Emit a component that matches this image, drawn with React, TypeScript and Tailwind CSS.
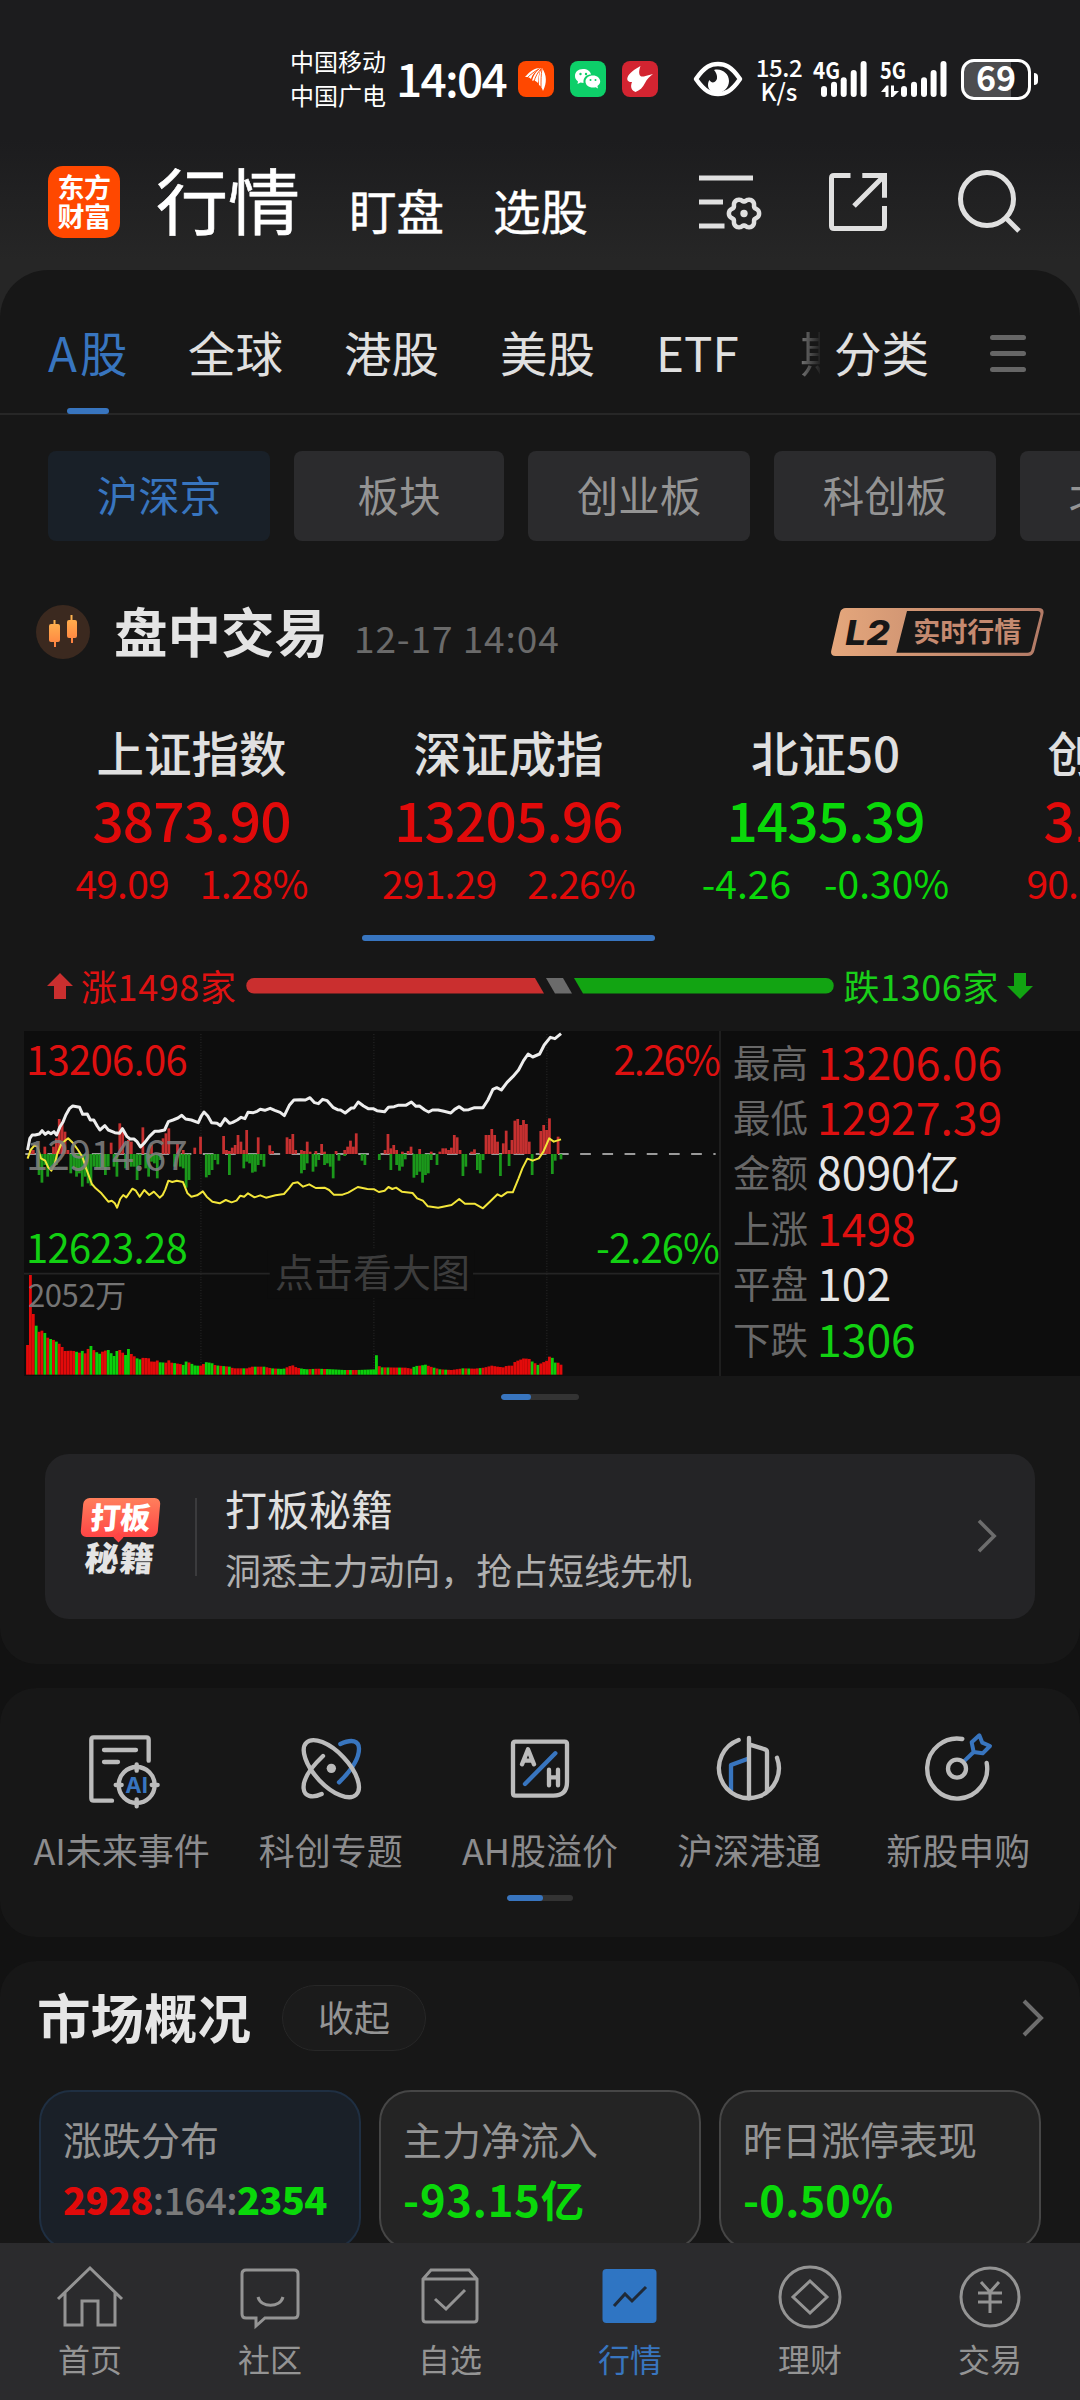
import React from "react";

const FONT = "font-['Noto_Sans_CJK_SC','Noto_Sans',sans-serif]";

/* ---------- intraday chart data (chart units) ---------- */
const X0 = 72;
const STEP = 7.535;
const MID = 702;
const BASE = 1364;

const PRICE =
  "72,690 78,655 84,645 92,645 103,642 110,632 118,643 126,636 133,641 141,635 148,645 156,622 165,605 172,585 182,565 190,558 208,562 216,583 228,582 236,600 245,600 254,618 261,630 274,617 283,630 300,638 312,640 320,626 332,650 340,657 350,657 358,665 367,681 378,668 390,650 404,634 415,634 430,630 440,605 452,600 465,594 475,586 485,597 500,600 518,608 526,588 533,576 543,588 553,608 567,610 576,617 588,596 600,610 608,607 620,600 630,592 640,596 648,577 662,578 672,574 680,568 692,571 706,565 718,571 732,577 743,587 756,556 768,540 785,539 798,540 810,533 822,548 832,551 843,538 855,542 870,562 882,569 890,570 902,579 918,564 925,564 936,546 950,558 962,566 975,566 985,572 1005,575 1015,562 1030,560 1040,556 1060,556 1075,546 1087,559 1096,558 1110,570 1120,576 1130,570 1145,570 1160,574 1178,579 1188,568 1200,560 1212,570 1225,569 1240,563 1262,563 1275,540 1288,508 1298,503 1310,510 1325,487 1340,470 1355,450 1368,422 1380,402 1392,411 1410,402 1422,375 1438,352 1450,356 1466,341";
const AVERAGE =
  "72,716 80,690 90,676 98,680 107,715 118,722 126,742 134,752 142,735 150,700 160,672 172,660 178,655 190,668 204,690 215,710 225,745 240,792 250,805 265,820 283,845 292,842 300,850 306,863 314,837 322,825 330,832 346,806 355,812 365,830 377,810 390,825 402,815 417,833 425,825 432,808 440,782 450,786 462,782 478,786 490,820 500,830 515,826 530,814 540,830 555,845 574,850 590,840 605,847 618,842 628,827 638,830 648,820 665,832 680,826 695,833 720,826 742,822 755,805 765,790 778,787 792,800 808,793 825,804 848,803 860,810 872,824 895,824 910,818 935,801 960,807 978,808 990,816 1005,812 1015,801 1025,807 1035,803 1050,815 1078,819 1090,835 1105,842 1118,859 1145,863 1180,855 1200,837 1215,851 1240,851 1262,865 1280,845 1300,823 1310,829 1325,817 1340,817 1355,775 1365,745 1378,716 1392,722 1408,715 1420,695 1435,655 1447,665 1466,658";
const UP =
  "80:690 87:690 118:680 141:680 148:655 156:597 163:605 170:635 178:690 291:668 313:610 321:630 336:660 343:665 374:622 397:675 427:655 434:640 442:625 465:672 480:690 510:683 525:650 585:648 593:690 600:693 608:683 615:675 622:645 630:665 638:690 645:630 675:652 706:676 713:693 751:652 758:657 766:642 773:690 788:690 796:693 804:665 811:695 826:693 841:672 849:695 879:693 902:690 909:680 917:662 924:680 932:640 1007:690 1015:642 1022:685 1030:675 1037:690 1052:695 1067:693 1075:680 1098:687 1127:695 1150:695 1157:685 1165:685 1173:690 1180:683 1188:645 1195:652 1203:690 1233:695 1241:688 1271:645 1278:645 1286:627 1293:645 1301:665 1316:670 1324:632 1331:690 1339:660 1346:602 1353:597 1361:615 1369:600 1376:612 1384:665 1414:633 1421:615 1429:630 1437:595 1459:650";
const DOWN =
  "103:765 110:788 118:735 126:770 133:750 141:735 148:735 186:760 193:745 200:770 208:760 216:800 223:770 231:790 238:797 246:740 254:745 261:745 268:742 276:765 283:740 298:740 306:770 328:745 343:740 351:740 359:780 366:735 381:745 389:770 397:725 404:730 412:775 419:720 457:740 472:740 480:745 487:803 495:780 540:772 548:765 555:750 563:720 571:733 600:765 638:745 645:725 653:730 660:758 668:755 675:735 683:720 691:740 788:760 796:750 804:730 819:755 826:740 834:720 849:735 857:730 864:740 871:775 887:722 902:708 947:722 955:735 992:720 1022:750 1037:735 1045:752 1052:740 1060:718 1082:773 1090:765 1098:755 1105:788 1112:765 1120:760 1127:720 1143:735 1210:768 1218:740 1248:750 1256:760 1263:720 1308:768 1331:738 1391:765 1444:762 1452:722 1467:718";
const VOLUME =
  "72:1275 80:1065 87:1182 95:1217 103:1238 110:1232 118:1240 126:1255 141:1260 156:1272 170:1293 190:1292 208:1298 216:1292 223:1300 231:1285 238:1278 246:1292 261:1302 270:1293 283:1290 298:1308 306:1293 313:1290 328:1305 336:1287 343:1302 358:1315 366:1318 374:1313 389:1315 397:1326 404:1325 412:1321 419:1327 434:1328 442:1320 449:1328 470:1332 480:1335 487:1323 495:1328 510:1337 525:1337 540:1326 555:1330 563:1336 600:1340 610:1345 645:1345 660:1340 690:1340 710:1345 740:1347 758:1338 766:1336 775:1343 800:1348 830:1346 870:1348 900:1350 935:1350 977:1348 984:1304 992:1342 1060:1343 1075:1346 1085:1338 1098:1337 1112:1334 1125:1340 1150:1348 1180:1350 1210:1345 1240:1346 1265:1343 1285:1337 1300:1340 1315:1342 1325:1337 1340:1337 1346:1325 1369:1315 1384:1317 1391:1325 1406:1335 1414:1330 1429:1322 1437:1308 1444:1314 1452:1330 1459:1328 1467:1335";
const GREEN_VOLUME = [
  95, 118, 133, 148, 200, 216, 238, 253, 261, 283, 291, 298, 306, 328, 336, 358, 366, 419, 427, 457, 480, 487, 502, 510,
  517, 540, 548, 555, 571, 585, 600, 638, 668, 690, 713, 728, 736, 743, 788, 796, 804, 819, 841, 857, 864, 871, 879, 887,
  894, 902, 917, 940, 947, 955, 962, 970, 977, 984, 1000, 1015, 1045, 1082, 1090, 1105, 1112, 1135, 1150, 1165, 1210,
  1225, 1256, 1391, 1406, 1444, 1452,
];

const parse = (s: string) => s.split(" ").map((p) => p.split(":").map(Number) as [number, number]);
const slot = (x: number) => Math.round((x - X0) / STEP);
const greenSlots = new Set(GREEN_VOLUME.map(slot));
const volumePoints = parse(VOLUME);

function volumeTop(x: number) {
  for (let i = 1; i < volumePoints.length; i++) {
    const [ax, ay] = volumePoints[i - 1];
    const [bx, by] = volumePoints[i];
    if (x <= bx + 0.5) return ay + ((by - ay) * Math.min(1, Math.max(0, (x - ax) / (bx - ax))));
  }
  return volumePoints[volumePoints.length - 1][1];
}

function Chart() {
  const volumes = Array.from({ length: 186 }, (_, i) => {
    const nominal = X0 + i * STEP;
    return { i, x: nominal, top: volumeTop(i < 60 ? Math.round(nominal) : nominal) };
  });
  return (
    <svg className="block h-[345px] w-[696px]" viewBox="62.7 333 1818.7 1035" preserveAspectRatio="none">
      {[525, 977, 1429].map((x) => (
        <line key={x} x1={x} x2={x} y1="342" y2="1364" stroke="#262626" strokeWidth="3" strokeDasharray="3 5" />
      ))}
      <rect x="700" y="990" width="540" height="145" fill="#0d0d0d" />
      <path d="M62.7 1061H705M1236 1061H1880" stroke="#242424" strokeWidth="5" />
      <line x1="66" x2="1870" y1={MID} y2={MID} stroke="#9a9a9a" strokeWidth="6" strokeDasharray="28 30" />
      {parse(UP).map(([x, y]) => (
        <rect key={x} x={X0 + slot(x) * STEP - 3.7} y={y} width="7.2" height={MID - y} fill="#c63030" />
      ))}
      {parse(DOWN).map(([x, y]) => (
        <rect key={x} x={X0 + slot(x) * STEP - 3.7} y={MID} width="7.2" height={y - MID} fill="#1b981b" />
      ))}
      {volumes.map((v) => (
        <rect
          key={v.i}
          x={v.x - 3.8}
          y={v.top}
          width="7.4"
          height={BASE - v.top}
          fill={greenSlots.has(v.i) ? "#0bd00b" : "#e30a0a"}
        />
      ))}
      <polyline points={AVERAGE} fill="none" stroke="#f3e63a" strokeWidth="2" strokeLinejoin="round" vectorEffect="non-scaling-stroke" />
      <polyline points={PRICE} fill="none" stroke="#ededed" strokeWidth="3" strokeLinejoin="round" vectorEffect="non-scaling-stroke" />
    </svg>
  );
}

/* ---------- status bar ---------- */
function StatusBar() {
  const tops = [86, 81.7, 77.3, 70, 61];
  return (
    <div className="flex h-[158px] items-center pl-[290px] text-white">
      <div className="flex w-[106px] -translate-y-[1px] flex-col gap-[10px] text-[24px] leading-[24px]">
        <span>中国移动</span>
        <span>中国广电</span>
      </div>
      <div className="w-[122px] -translate-y-[2px] whitespace-nowrap text-[46px] font-medium leading-[50px] tracking-[-1.7px]">14:04</div>
      <div className="flex gap-4">
        <svg className="size-9" viewBox="0 0 36 36">
          <rect width="36" height="36" rx="8" fill="#ff4800" />
          <path d="M7 16c5-6 10-9 15-9-5 3-8 7-9 11-2-2-4-2-6-2zM14 20c1-5 4-10 9-13-2 5-3 10-3 15-2-2-4-3-6-2zM21 24c-1-6 0-12 3-17 5 7 5 15 1 23-1-3-2-5-4-6z" fill="#fff" />
          <path d="M9 17c4-4 8-7 12-9M16 21c1-5 4-10 7-13M23 26c0-7 0-12 1-18" stroke="#ff4800" strokeWidth=".9" fill="none" />
        </svg>
        <svg className="size-9" viewBox="0 0 36 36">
          <rect width="36" height="36" rx="8" fill="#0dcf69" />
          <path d="M13 8c-5 0-8 3-8 7 0 2.400 1 4 3 5.400L7.500 23l3-1.500c1 .3 2 .4 3 .4C13 16 17 13.500 21 13.500 20.500 10 17 8 13 8z" fill="#fff" />
          <path d="M23 14.500c-4.500 0-7.500 2.700-7.500 6.100s3 6 7.500 6c1 0 1.800-.1 2.600-.4L28 27.500l-.6-2.400c1.700-1.100 2.800-2.700 2.800-4.500 0-3.400-3-6.100-7.200-6.100z" fill="#fff" />
          <g fill="#0dcf69">
            <circle cx="10.500" cy="13" r="1.200" />
            <circle cx="16" cy="13" r="1.200" />
            <circle cx="20.500" cy="19" r="1" />
            <circle cx="25.500" cy="19" r="1" />
          </g>
        </svg>
        <svg className="size-9" viewBox="0 0 36 36">
          <rect width="36" height="36" rx="8" fill="#d32431" />
          <path d="M18.500 5c-1.500 4-2 8 0 10 1.200 1 3 .6 5 0l7.500-2c-3.500 2.500-6 5-8 9-2 4.500-5.500 7.500-9.500 9-4-1.500-5.500-5-3.500-10-3 .5-5.500-1.500-4.500-4.500C7 12 13 8 18.500 5z" fill="#fff" />
        </svg>
      </div>
      <svg className="ml-[35px] h-9 w-[50px]" viewBox="0 0 50 36">
        <path d="M3 18C12 5 18 3 25 3s13 2 22 15C38 31 32 33 25 33S12 31 3 18z" fill="none" stroke="#fff" strokeWidth="4.500" strokeLinejoin="round" />
        <path d="M21 9c8-2 15 4 15 11 0 6-5 12-12 12-6 0-9-4-9-8 0-2 .5-4 1.500-5 1 2 3 3 5 2 4-2 3-8-.5-12z" fill="#fff" />
      </svg>
      <div className="ml-[9px] flex w-[54px] flex-col items-center text-[24px] font-medium leading-[24px]">
        <span className="tracking-[-0.4px]">15.2</span>
        <span>K/s</span>
      </div>
      <svg className="ml-[5px] h-10 w-[138px]" viewBox="811 59 138 40" fill="#fff">
        {[824, 834, 843.7, 853.7, 863.6].map((x, i) => (
          <rect key={x} x={x - 3} y={tops[i]} width="6" height={97 - tops[i]} rx="3" />
        ))}
        {[904, 914, 924, 933.6, 943.5].map((x, i) => (
          <rect key={x} x={x - 3} y={tops[i]} width="6" height={97 - tops[i]} rx="3" />
        ))}
        <text x="813" y="78.500" fontSize="23" fontWeight="700" textLength="27" lengthAdjust="spacingAndGlyphs">4G</text>
        <text x="880" y="78.500" fontSize="23" fontWeight="700" textLength="26" lengthAdjust="spacingAndGlyphs">5G</text>
        <path d="M881 92l5.500-6.500h2V97h-3v-5zM891 85.500h3V91h5l-6 6h-2z" />
      </svg>
      <div className="ml-[12px] flex h-[41px] w-[70px] items-center justify-center rounded-[13px] border-[3px] border-white bg-[linear-gradient(90deg,#4d4d4f_74%,#1c1c1e_74%)] text-[34px] font-bold leading-[34px]">
        <span className="-translate-y-[2px]">69</span>
      </div>
      <div className="ml-[3px] h-3 w-[4px] rounded-r-sm bg-white" />
    </div>
  );
}

const GEAR = Array.from({ length: 72 }, (_, i) => {
  const a = (i / 72) * Math.PI * 2;
  const r = 13.8 + 1.6 * Math.cos(6 * a) - 0.3 * Math.cos(12 * a);
  return `${(744 + r * Math.cos(a)).toFixed(2)},${(213.5 + r * Math.sin(a)).toFixed(2)}`;
}).join(" ");

function TitleBar() {
  return (
    <div className="flex h-[112px] items-center pb-[24px] pl-[48px] text-white">
      <div className="flex h-[72px] w-[72px] flex-col items-center justify-center rounded-[15px] bg-[#ff4800] pb-[3px] text-[27px] font-bold leading-[29px] tracking-[-0.5px]">
        <span>东方</span>
        <span>财富</span>
      </div>
      <div className="ml-[36px] w-[192px] -translate-y-[4px] whitespace-nowrap text-[72px] font-normal leading-[80px] [-webkit-text-stroke:0.6px_white]">行情</div>
      <div className="ml-[1px] w-[144px] translate-y-[8px] whitespace-nowrap text-[47.500px] font-normal leading-[50px] [-webkit-text-stroke:0.4px_white]">盯盘</div>
      <div className="w-[203px] translate-y-[8px] whitespace-nowrap text-[47.500px] font-normal leading-[50px] [-webkit-text-stroke:0.4px_white]">选股</div>
      <svg className="h-[68px] w-[330px]" viewBox="696 168 330 68" fill="none" stroke="#e0e0e0" strokeWidth="5">
        <path d="M699 178H753M699 202H723M699 226H724.500" />
        <polygon points={GEAR} strokeWidth="4.500" strokeLinejoin="round" />
        <circle cx="744" cy="213.500" r="3.700" fill="#e0e0e0" stroke="none" />
        <path d="M850.500 175.500H834q-2.500 0-2.500 2.500V226q0 2.500 2.500 2.500H882q2.500 0 2.500-2.500V206M862.300 175.500H884.500V197.700M884 176L854 206" />
        <circle cx="987" cy="199" r="26.500" />
        <path d="M1006 218L1019 231" />
      </svg>
    </div>
  );
}

/* ---------- market panel ---------- */
function MarketTabs() {
  return (
    <div className="relative flex h-[145px] items-center border-b-2 border-[#272727] pt-[22px] pl-[48px] text-[47.500px] leading-[60px] text-[#e0e0e0]">
      <span className="w-[140px] -translate-y-[1px] tracking-[3px] text-[#3875bf]">A股</span>
      <span className="w-[156px] -translate-y-[1px]">全球</span>
      <span className="w-[156px] -translate-y-[1px]">港股</span>
      <span className="w-[156px] -translate-y-[1px]">美股</span>
      <span className="w-[144px] -translate-y-[1px]">ETF</span>
      <span className="w-[20px] -translate-y-[1px] overflow-hidden whitespace-nowrap bg-[linear-gradient(90deg,#777,#222)] bg-clip-text text-transparent">期</span>
      <span className="ml-[14px] w-[156px] -translate-y-[1px]">分类</span>
      <span className="flex translate-y-[1px] flex-col gap-[11px]">
        <i className="h-[5px] w-[36px] rounded bg-[#666]" />
        <i className="h-[5px] w-[36px] rounded bg-[#666]" />
        <i className="h-[5px] w-[36px] rounded bg-[#666]" />
      </span>
      <i className="absolute bottom-[-1px] left-[67px] h-[6px] w-[42px] rounded-full bg-[#3875bf]" />
    </div>
  );
}

function Chips() {
  const base = "flex h-[90px] shrink-0 items-center justify-center whitespace-nowrap rounded-[8px] pb-[4px] text-[41.500px]";
  return (
    <div className="mt-[36px] flex gap-[24px] overflow-hidden pl-[48px]">
      <div className={`${base} w-[222px] bg-[#192028] text-[#3875bf]`}>沪深京</div>
      <div className={`${base} w-[210px] bg-[#2b2b2d] text-[#949494]`}>板块</div>
      <div className={`${base} w-[222px] bg-[#2b2b2d] text-[#949494]`}>创业板</div>
      <div className={`${base} w-[222px] bg-[#2b2b2d] text-[#949494]`}>科创板</div>
      <div className={`${base} w-[222px] bg-[#2b2b2d] text-[#949494]`}>北交所</div>
    </div>
  );
}

function SessionHeader() {
  return (
    <div className="mt-[61px] flex h-[60px] items-center pl-[36px]">
      <svg className="size-[54px]" viewBox="0 0 54 54">
        <defs>
          <linearGradient id="candle" x1="0" y1="0" x2="0" y2="1">
            <stop offset="0" stopColor="#ffb650" />
            <stop offset="1" stopColor="#ff8040" />
          </linearGradient>
        </defs>
        <circle cx="27" cy="27" r="27" fill="#3b291f" />
        <g fill="url(#candle)">
          <path d="M13 21q0-2 2-2h2.500v-4h2v4H22q2 0 2 2v14q0 2-2 2h-2v5h-2v-5h-3q-2 0-2-2z" />
          <path d="M31 17q0-2 2-2h1.500v-5h2v5H39q2 0 2 2v14q0 2-2 2h-2v5h-2v-5h-2q-2 0-2-2z" />
        </g>
      </svg>
      <div className="ml-[24px] w-[240px] -translate-y-[2px] whitespace-nowrap text-[53.500px] font-bold leading-[60px] text-[#e4e4e4]">盘中交易</div>
      <div className="w-[466px] translate-y-[5px] whitespace-nowrap text-[37px] leading-[44px] tracking-[0.9px] text-[#6a6a6a]">12-17 14:04</div>
      <svg className="h-[76px] w-[240px] shrink-0 translate-y-[2px]" viewBox="0 0 720 228">
        <defs>
          <linearGradient id="level" x1="0" y1="0" x2="1" y2="0">
            <stop offset="0" stopColor="#e5a77c" />
            <stop offset="1" stopColor="#b27a66" />
          </linearGradient>
        </defs>
        <path
          fill="url(#level)"
          fillRule="evenodd"
          d="M78 36H656q18 0 14 18L643 164q-4 16-20 16H46q-16 0-12-17L60 50q4-14 18-14zM261 45L229 170H622q10 0 12-8L661 56q2-11-8-11z"
        />
        <text x="76" y="146" fontSize="101" fontWeight="800" fontStyle="italic" fill="#171717" textLength="134" lengthAdjust="spacingAndGlyphs" fontFamily="Inter">L2</text>
        <text x="280" y="137" fontSize="81" fontWeight="700" fill="#c58a70" textLength="324" lengthAdjust="spacingAndGlyphs">实时行情</text>
      </svg>
    </div>
  );
}

const INDICES = [
  { name: "上证指数", value: "3873.90", change: "49.09", pct: "1.28%", up: true },
  { name: "深证成指", value: "13205.96", change: "291.29", pct: "2.26%", up: true, active: true },
  { name: "北证50", value: "1435.39", change: "-4.26", pct: "-0.30%", up: false },
  { name: "创业板指", value: "3175.92", change: "90.29", pct: "2.93%", up: true },
];

function Indices() {
  return (
    <div className="mt-[60px] flex overflow-hidden pl-[33px]">
      {INDICES.map((q) => (
        <div key={q.name} className={`flex w-[317px] shrink-0 flex-col items-center whitespace-nowrap ${q.up ? "text-[#e10a0a]" : "text-[#0ad80a]"}`}>
          <span className="text-[47.500px] font-medium leading-[60px] text-[#e0e0e0]">{q.name}</span>
          <span className="mt-[1px] text-[55px] font-medium leading-[70px] tracking-[-0.9px]">{q.value}</span>
          <span className={`mt-[4px] flex text-[39px] leading-[50px] ${q.up ? "gap-[31px] tracking-[-0.8px]" : "gap-[33px] tracking-[0px]"}`}>
            <span>{q.change}</span>
            <span>{q.pct}</span>
          </span>
          <i className={`mt-[28px] h-[6px] w-[293px] rounded-full ${q.active ? "bg-[#3875bf]" : ""}`} />
        </div>
      ))}
    </div>
  );
}

function Breadth() {
  return (
    <div className="mt-[20px] flex h-[50px] items-center whitespace-nowrap pl-[46px] text-[36px] leading-[50px]">
      <svg className="h-[28px] w-[28px]" viewBox="0 0 28 28">
        <path d="M14 1L27 14H20V27H8V14H1z" fill="#ca2f2f" strokeLinejoin="round" />
      </svg>
      <span className="ml-[7px] w-[164.500px] -translate-y-[1px] tracking-[0.6px] text-[#de1212]">涨1498家</span>
      <svg className="h-4 w-[589px]" viewBox="0 0 589 16">
        <path d="M8 0H289L298 15.500H8A7.500 7.500 0 0 1 8 0z" fill="#ca2f2f" />
        <path d="M300 0H317L326 15.500H309z" fill="#6b6b6b" />
        <path d="M328 0H580A7.500 7.500 0 0 1 580 15.500H337z" fill="#12a412" />
      </svg>
      <span className="ml-[9px] w-[162px] -translate-y-[1px] tracking-[0.6px] text-[#19cf19]">跌1306家</span>
      <svg className="h-[28px] w-[28px]" viewBox="0 0 28 28">
        <path d="M14 27L1 14H8V1H20V14H27z" fill="#12a412" />
      </svg>
    </div>
  );
}

const STATS = [
  ["最高", "13206.06", "text-[#de1010]"],
  ["最低", "12927.39", "text-[#de1010]"],
  ["金额", "8090亿", "text-[#e6e6e6]"],
  ["上涨", "1498", "text-[#de1010]"],
  ["平盘", "102", "text-[#e6e6e6]"],
  ["下跌", "1306", "text-[#12d012]"],
];

function ChartRow() {
  const label = "absolute whitespace-nowrap text-[40px] leading-[50px]";
  return (
    <div className="mt-[20px] ml-[24px] flex h-[345px] bg-[#0d0d0d]">
      <div className="relative w-[697px] border-r-2 border-[#1e1e1e]">
        <Chart />
        <span className={`${label} left-[2px] top-[2px] tracking-[-0.7px] text-[#de1010]`}>13206.06</span>
        <span className={`${label} left-[2px] top-[97px] tracking-[-0.7px] text-[#808080]/90`}>12914.67</span>
        <span className={`${label} left-[2px] top-[190px] tracking-[-0.7px] text-[#12d012]`}>12623.28</span>
        <span className={`${label} right-[0px] top-[2px] tracking-[-1.8px] text-[#de1010]`}>2.26%</span>
        <span className={`${label} right-[0px] top-[190px] tracking-[-0.9px] text-[#12d012]`}>-2.26%</span>
        <span className="absolute left-[251px] top-[214px] whitespace-nowrap text-[39px] leading-[50px] text-[#3c3c3c]">点击看大图</span>
        <span className="absolute left-[4px] top-[243px] whitespace-nowrap text-[31px] leading-[40px] tracking-[-0.4px] text-[#747474]">2052万</span>
      </div>
      <div className="flex flex-col pl-[12px] pt-[2px]">
        {STATS.map(([k, v, c]) => (
          <div key={k} className="flex h-[55.400px] items-center whitespace-nowrap">
            <span className="w-[84px] text-[37.500px] leading-[50px] text-[#686868]">{k}</span>
            <span className={`text-[44.500px] leading-[50px] ${c}`}>{v}</span>
          </div>
        ))}
      </div>
    </div>
  );
}

function Pager({ className, on }: { className: string; on: string }) {
  return (
    <div className={`h-[6px] self-center overflow-hidden rounded-full bg-[#333] ${className}`}>
      <div className={`h-full rounded-full bg-[#3875bf] ${on}`} />
    </div>
  );
}

function Chevron({ className }: { className: string }) {
  return (
    <svg className={className} viewBox="0 0 22 38" fill="none" stroke="#6d6d6d" strokeWidth="4">
      <path d="M2 2L19 19L2 36" />
    </svg>
  );
}

function Banner() {
  return (
    <div className="mx-[45px] mt-[54px] flex h-[165px] items-center rounded-[24px] bg-[#242426] pl-[35px]">
      <div className="relative flex h-[78px] w-[80px] flex-col items-center font-black">
        <div className="flex h-[39px] w-[77px] -skew-x-[5deg] items-center justify-center rounded-[6px] bg-[linear-gradient(180deg,#ff7f5c,#ff4545)] pb-[2px] text-[30px] leading-[37px] text-white">打板</div>
        <i className="absolute left-[35px] top-[36px] size-[7px] rotate-45 bg-[#ff4545]" />
        <div className="mt-[2px] -skew-x-[5deg] whitespace-nowrap text-[34px] leading-[36px] tracking-[1px] text-[#e4e4e4]">秘籍</div>
      </div>
      <i className="ml-[35px] h-[78px] w-[2px] bg-[#3b3b3d]" />
      <div className="ml-[28px] flex w-[752px] translate-y-[1px] flex-col gap-[13px] whitespace-nowrap">
        <span className="text-[42px] leading-[50px] text-[#e0e0e0]">打板秘籍</span>
        <span className="text-[35.900px] leading-[46px] text-[#b0b0b0]">洞悉主力动向，抢占短线先机</span>
      </div>
      <Chevron className="h-[34px] w-[20px] -translate-y-[1px]" />
    </div>
  );
}

/* ---------- shortcuts ---------- */
const BLUE = "#3875bf";
const LIGHT = "#bcbcbc";

const SHORTCUTS: { label: string; box: string; art: React.ReactNode }[] = [
  {
    label: "AI未来事件",
    box: "18 25 270 270",
    art: (
      <>
        <path d="M123 258H68q-7 0-7-7V75q0-7 7-7H226q7 0 7 7V138M99 106H195M99 142H141" />
        <circle cx="197" cy="211" r="54" />
        <path d="M197 149V168M197 254V275M134 211H152M242 211H260" />
        <text x="197" y="235" textAnchor="middle" fontSize="66" fontWeight="700" fontFamily="Inter" fill={BLUE} stroke="none">AI</text>
      </>
    ),
  },
  {
    label: "科创专题",
    box: "647 25 270 270",
    art: (
      <>
        <path d="M810 88C845 72 866 78 866 102C866 134 845 165 806 203" stroke={BLUE} />
        <ellipse cx="783" cy="162" rx="108" ry="50" transform="rotate(46.500 783 162)" />
        <path d="M758 124C720 160 697 196 700 222C702 244 724 252 754 238" />
        <circle cx="783" cy="161" r="14" fill={LIGHT} stroke="none" />
      </>
    ),
  },
  {
    label: "AH股溢价",
    box: "1275 25 270 270",
    art: (
      <>
        <path d="M1336 81H1484q7 0 7 7V202Q1491 243 1450 243H1336q-7 0-7-7V88q0-7 7-7z" />
        <path d="M1365 208L1456 116" stroke={BLUE} />
        <path d="M1356 149L1374 104L1392 149M1361 138H1387M1437 165V212M1464 165V212M1437 188H1464" />
      </>
    ),
  },
  {
    label: "沪深港通",
    box: "612 25 270 270",
    art: (
      <>
        <path d="M693 229V151L744 132" stroke={BLUE} />
        <path d="M716 76A90 90 0 1 0 831 129M747 70V252M747 89L795 104Q801 106 801 112V233" />
      </>
    ),
  },
  {
    label: "新股申购",
    box: "1239 25 270 270",
    art: (
      <>
        <path d="M1394 138L1421 112M1421 112L1415 83L1438 62L1447 84L1470 94L1448 116z" stroke={BLUE} strokeWidth="12" />
        <path d="M1387 73A90 90 0 1 0 1460 145" />
        <circle cx="1371" cy="162" r="27" />
      </>
    ),
  },
];

function Shortcuts() {
  return (
    <section className="mt-[24px] flex h-[249px] flex-col rounded-[36px] bg-[#171717] pt-[35px]">
      <div className="flex pl-[17px]">
        {SHORTCUTS.map((s) => (
          <div key={s.label} className="flex w-[209.200px] flex-col items-center whitespace-nowrap">
            <svg className="size-[90px]" viewBox={s.box} fill="none" stroke={LIGHT} strokeWidth="13" strokeLinecap="round" strokeLinejoin="round">
              {s.art}
            </svg>
            <span className="mt-[11px] text-[36px] leading-[50px] text-[#8c8c8e]">{s.label}</span>
          </div>
        ))}
      </div>
      <Pager className="mt-[21px] w-[66px]" on="w-[36px]" />
    </section>
  );
}

function Overview() {
  const card = "flex h-[160px] w-[322px] flex-col whitespace-nowrap rounded-[32px] border-2 pl-[22px] pt-[19px]";
  const title = "text-[39px] leading-[54px] text-[#949494]";
  return (
    <section className="mt-[24px] h-[282px] overflow-hidden rounded-t-[36px] bg-[#171717]">
      <div className="flex h-[114px] items-center pl-[37px]">
        <span className="w-[214px] -translate-y-[2px] text-[53.500px] font-bold leading-[60px] text-[#e6e6e6]">市场概况</span>
        <span className="ml-[31px] flex h-[66px] w-[144px] items-center justify-center rounded-full border border-[#272727] bg-[#1b1b1b] pb-[4px] text-[36px] text-[#949494]">收起</span>
        <Chevron className="ml-[596px] h-[38px] w-[22px]" />
      </div>
      <div className="mt-[15px] flex gap-[18px] pl-[39px]">
        <div className={`${card} border-[#1f2f42] bg-[#1a2028]`}>
          <span className={title}>涨跌分布</span>
          <span className="mt-[8px] text-[38px] font-bold leading-[52px] tracking-[-0.7px] text-[#7a7a7a]">
            <b className="text-[#e10a0a]">2928</b>
            <span className="font-medium">:164:</span>
            <b className="text-[#0ad80a]">2354</b>
          </span>
        </div>
        <div className={`${card} border-[#464646] bg-[#242424]`}>
          <span className={title}>主力净流入</span>
          <span className="mt-[6px] text-[43.500px] font-bold leading-[56px] tracking-[0.8px] text-[#0ad80a]">-93.15亿</span>
        </div>
        <div className={`${card} border-[#464646] bg-[#242424]`}>
          <span className={title}>昨日涨停表现</span>
          <span className="mt-[6px] text-[43.500px] font-bold leading-[56px] tracking-[0.2px] text-[#0ad80a]">-0.50%</span>
        </div>
      </div>
    </section>
  );
}

/* ---------- bottom navigation ---------- */
const NAV: { label: string; active?: boolean; art: React.ReactNode }[] = [
  { label: "首页", art: <path d="M4 36L36 5L68 36M11 30V62H28V38H44V62H61V30" /> },
  {
    label: "社区",
    art: <path d="M12 7H60q4 0 4 4V51q0 4-4 4H31L22 63V55H12q-4 0-4-4V11q0-4 4-4zM24 34C27 45 46 45 49 34" />,
  },
  {
    label: "自选",
    art: <path d="M17 7H55L63 16V56q0 3-3 3H12q-3 0-3-3V16zM9 16H63M21 36L32 46L51 27" />,
  },
  {
    label: "行情",
    active: true,
    art: (
      <>
        <rect x="8.500" y="6" width="54" height="54" rx="4" fill="#2f75c3" stroke="none" />
        <path d="M20 43L31 31L38 38L52 24" stroke="#1f2a38" />
      </>
    ),
  },
  {
    label: "理财",
    art: (
      <>
        <circle cx="36" cy="34" r="30" />
        <path d="M36 18L53 34L36 50L19 34z" />
      </>
    ),
  },
  {
    label: "交易",
    art: (
      <>
        <circle cx="36" cy="34" r="29" />
        <path d="M27 19L36 29L45 19M24 30H48M24 39H48M36 29V50" />
      </>
    ),
  },
];

function BottomNav() {
  return (
    <nav className="flex h-[157px] bg-[#2b2b2d] pt-[20px]">
      {NAV.map((n) => (
        <div key={n.label} className={`flex w-[180px] flex-col items-center ${n.active ? "text-[#3875bf]" : "text-[#949494]"}`}>
          <svg className="mr-px h-[68px] w-[72px]" viewBox="0 0 72 68" fill="none" stroke="currentColor" strokeWidth="3">
            {n.art}
          </svg>
          <span className="mt-[5px] text-[32px] leading-[44px]">{n.label}</span>
        </div>
      ))}
    </nav>
  );
}

export default function App() {
  return (
    <div className={`flex h-[2400px] w-[1080px] flex-col overflow-hidden bg-[#121212] ${FONT}`}>
      <div className="h-[330px] shrink-0 bg-[linear-gradient(180deg,#1c1c1e_0px,#1c1c1e_140px,#262626_260px,#262626_330px)]">
        <StatusBar />
        <TitleBar />
      </div>
      <section className="z-10 mt-[-60px] flex h-[1394px] shrink-0 flex-col rounded-b-[36px] rounded-t-[48px] bg-[#171717]">
        <MarketTabs />
        <Chips />
        <SessionHeader />
        <Indices />
        <Breadth />
        <ChartRow />
        <Pager className="mt-[18px] w-[78px]" on="w-[30px]" />
        <Banner />
      </section>
      <Shortcuts />
      <Overview />
      <BottomNav />
    </div>
  );
}
